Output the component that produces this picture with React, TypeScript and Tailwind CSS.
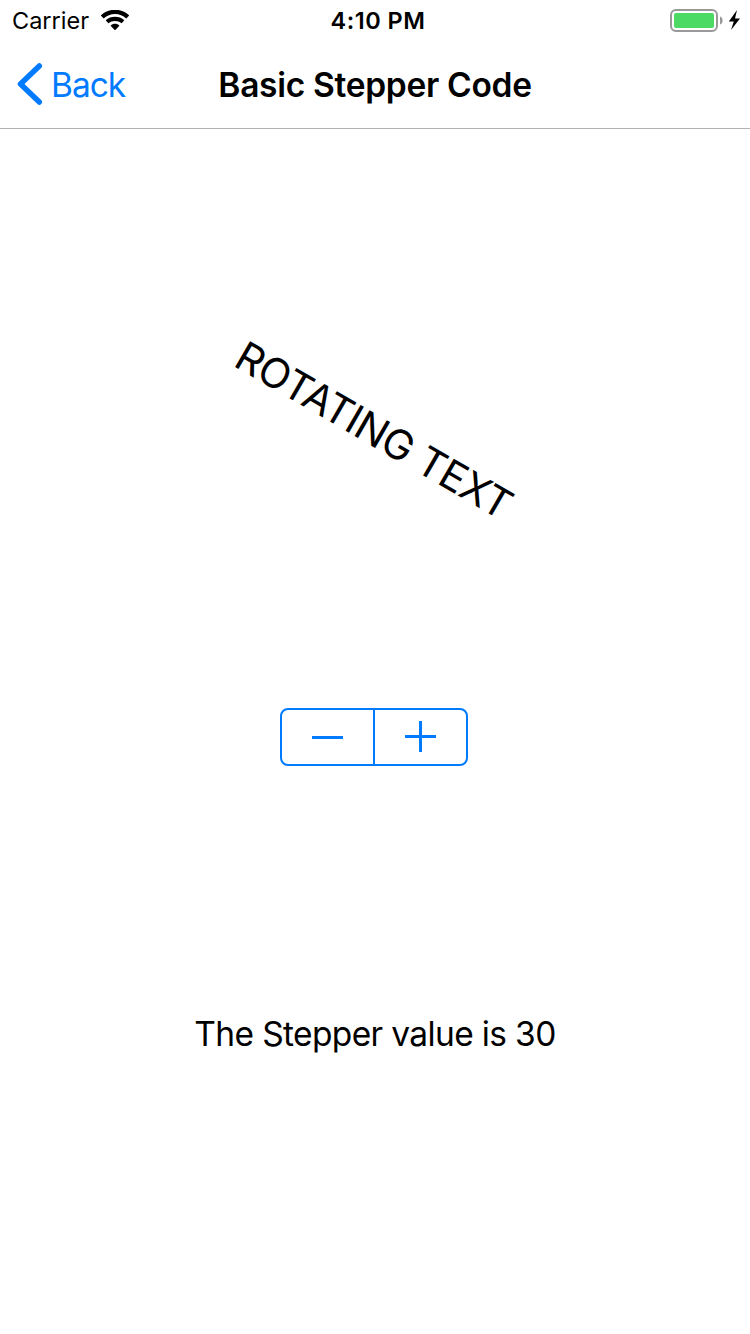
import { useState } from "react";

function StatusBar() {
  return (
    <div className="grid h-10 grid-cols-3 items-center pl-3 pr-2 text-[23.5px] leading-[38px]">
      <div className="flex items-center gap-[11px]">
        <span className="w-[78px] whitespace-nowrap pt-0.5">Carrier</span>
        <svg width="28" height="20" viewBox="0 0 28 20" fill="none" stroke="black">
          <path d="M1.300 7C8.500 .100 19.500 .100 26.700 7" strokeWidth="4.200" />
          <path d="M6 11.800C10.500 7.900 17.500 7.900 22 11.800" strokeWidth="4.100" />
          <path d="M14 20.300 9.600 15.800C12 13.200 16 13.200 18.400 15.800Z" fill="black" stroke="none" />
        </svg>
      </div>
      <span className="pl-0.5 pt-0.5 text-center font-semibold tracking-[0.5px]">4:10 PM</span>
      <div className="flex items-center justify-end">
        <svg width="72" height="24" viewBox="0 0 72 24">
          <rect x="1" y="2" width="46" height="21" rx="5" fill="none" stroke="#999999" strokeWidth="2" />
          <rect x="4" y="5" width="40" height="15" rx="2" fill="#4cd964" />
          <path d="M50 8.500c3.500 1 3.500 7 0 8z" fill="#999999" />
          <path d="M67 2 58.800 13.500h5L61 22l9-11.500h-5z" fill="black" />
        </svg>
      </div>
    </div>
  );
}

export default function App() {
  const [value, setValue] = useState(30);
  return (
    <div className="flex h-[1334px] w-[750px] flex-col overflow-hidden bg-white font-[Inter,sans-serif] text-black">
      <StatusBar />
      <header className="grid h-[89px] grid-cols-[1fr_auto_1fr] items-center border-b border-[#b2b2b2]">
        <button className="flex items-center gap-2 pl-4 text-[33.5px] tracking-[-1px] text-[#007aff]">
          <svg width="27" height="42" viewBox="0 0 27 42" fill="none" stroke="currentColor" strokeWidth="5.500" strokeLinecap="round" strokeLinejoin="round">
            <path d="M23.300 3 4.500 21l18.800 18" />
          </svg>
          <span className="pt-0.5">Back</span>
        </button>
        <h1 className="pt-0.5 text-[33.5px] font-semibold tracking-[-0.3px]">Basic Stepper Code</h1>
      </header>
      <main className="flex flex-col items-center">
        <div className="mt-[272px] flex h-[60px] items-center whitespace-nowrap pr-px text-[41px] tracking-[-0.6px]" style={{ transform: `translateX(-1px) rotate(${value}deg)` }}>
          ROTATING TEXT
        </div>
        <div className="mr-0.5 mt-[247px] flex h-[58px] w-[188px] rounded-lg border-2 border-[#007aff] text-[#007aff]">
          <button aria-label="Decrement" onClick={() => setValue(value - 1)} className="flex flex-1 items-center justify-center">
            <svg width="32" height="32" stroke="currentColor" strokeWidth="3"><path d="M0 16.500h31" /></svg>
          </button>
          <div className="w-0.5 bg-[#007aff]" />
          <button aria-label="Increment" onClick={() => setValue(value + 1)} className="flex flex-1 items-center justify-center">
            <svg width="32" height="32" stroke="currentColor" strokeWidth="3"><path d="M0 15.500h31M15.500 0v31" /></svg>
          </button>
        </div>
        <p className="mt-[243px] text-[33.5px] leading-[50px] tracking-[-0.64px]">The Stepper value is {value}</p>
      </main>
    </div>
  );
}
